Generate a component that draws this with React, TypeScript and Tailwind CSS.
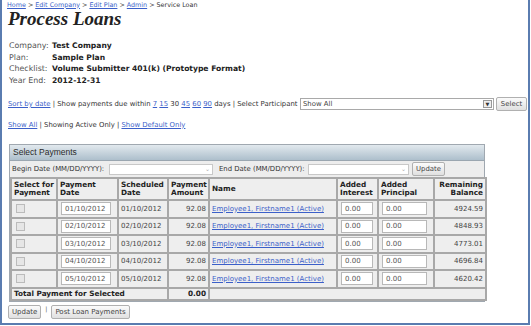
import React from 'react';

const PAYMENTS = [
  { date: '01/10/2012', balance: '4924.59' },
  { date: '02/10/2012', balance: '4848.93' },
  { date: '03/10/2012', balance: '4773.01' },
  { date: '04/10/2012', balance: '4696.84' },
  { date: '05/10/2012', balance: '4620.42' },
];

function Link({ children }: { children: React.ReactNode }) {
  return <span className="text-[#3b5fc9] underline">{children}</span>;
}

function Btn({ children, className = '' }: { children: React.ReactNode; className?: string }) {
  return (
    <div
      className={`flex items-center h-[14px] px-[3px] border border-[#b0b0b0] rounded-[2px] bg-gradient-to-b from-[#fbfbfb] to-[#e0e0e0] text-[#444] ${className}`}
    >
      {children}
    </div>
  );
}

function DateBox({ width }: { width: string }) {
  return (
    <div className={`flex items-center justify-end h-[11px] bg-white border border-[#c8c8c8] pr-[2px] ${width}`}>
      <span className="text-[#aaa] text-[6px] leading-none">&#8964;</span>
    </div>
  );
}

function TextBox({ value, width }: { value: string; width: string }) {
  return (
    <div className={`flex items-center h-[13px] ml-[3px] pl-[3px] bg-white border border-[#b8b8b8] text-[#555] ${width}`}>
      {value}
    </div>
  );
}

const cell = 'border-2 border-[#a8a8a8] bg-[#eeeeee] p-0';

export default function App() {
  return (
    <div className="w-[531px] h-[326px] bg-white">
      <div className="w-[530px] h-[325px] border-x-2 border-b-2 border-[#5a7cb0] pl-[5px] pr-[1px] font-['DejaVu_Sans',sans-serif] text-[7px] text-[#333] overflow-hidden">
        {/* breadcrumb */}
        <div className="flex items-center h-[9px] mt-[1px] text-[6.4px] text-[#333] gap-[2px]">
          <Link>Home</Link> &gt; <Link>Edit Company</Link> &gt; <Link>Edit Plan</Link> &gt; <Link>Admin</Link> &gt; <span>Service Loan</span>
        </div>

        <div className="h-[18px] leading-[18px] pl-[1px] font-['Liberation_Serif',serif] text-[19px] font-bold italic text-[#222]">
          Process Loans
        </div>

        {/* plan info */}
        <div className="mt-[12px] pl-[2px] grid grid-cols-[43px_auto] leading-[11.5px] text-[7.9px]">
          <span className="text-[#555]">Company:</span>
          <span className="font-bold text-[#222] text-[7.6px]">Test Company</span>
          <span className="text-[#555]">Plan:</span>
          <span className="font-bold text-[#222] text-[7.6px]">Sample Plan</span>
          <span className="text-[#555]">Checklist:</span>
          <span className="font-bold text-[#222] text-[7.6px]">Volume Submitter 401(k) (Prototype Format)</span>
          <span className="text-[#555]">Year End:</span>
          <span className="font-bold text-[#222] text-[7.6px]">2012-12-31</span>
        </div>

        {/* filters */}
        <div className="mt-[11px] h-[14px] flex items-center pl-[1px] text-[6.9px]">
          <span className="whitespace-pre">
            <Link>Sort by date</Link> | Show payments due within <Link>7</Link> <Link>15</Link> 30 <Link>45</Link>{' '}
            <Link>60</Link> <Link>90</Link> days | Select Participant
          </span>
          <div className="ml-auto flex items-center justify-between w-[194px] h-[12px] bg-white border border-[#a9a9a9] pl-[2px] pr-[1px]">
            <span className="text-[#444]">Show All</span>
            <div className="flex items-center justify-center w-[9px] h-[8px] border border-[#999] bg-[#eee] text-[5px] leading-none text-[#333]">
              &#9660;
            </div>
          </div>
          <Btn className="ml-[2px] w-[31px] justify-center">Select</Btn>
        </div>

        <div className="mt-[8px] h-[12px] flex items-center pl-[1px] whitespace-pre text-[6.9px]">
          <Link>Show All</Link> | Showing Active Only | <Link>Show Default Only</Link>
        </div>

        {/* Select Payments panel */}
        <div className="mt-[13px] ml-[2px] w-[476px] border border-[#a0a8b0]">
          <div className="h-[16px] flex items-center pl-[3px] bg-gradient-to-b from-[#e2e9ee] to-[#adbfcc] font-['Liberation_Sans',sans-serif] text-[8.5px] text-[#2a2a2a] border-b border-[#9aa6b0]">
            Select Payments
          </div>
          <div className="h-[16px] flex items-center pl-[2px] bg-[#ededed] text-[6.9px]">
            <span className="w-[97px]">Begin Date (MM/DD/YYYY):</span>
            <DateBox width="w-[104px]" />
            <span className="ml-[6px] w-[89px]">End Date (MM/DD/YYYY):</span>
            <DateBox width="w-[101px]" />
            <Btn className="ml-[3px] h-[13px]">Update</Btn>
          </div>
          <table className="w-[475px] table-fixed border-collapse border-2 border-[#777]">
            <colgroup>
              <col className="w-[46px]" />
              <col className="w-[61px]" />
              <col className="w-[50px]" />
              <col className="w-[41px]" />
              <col className="w-[128px]" />
              <col className="w-[41px]" />
              <col className="w-[56px]" />
              <col className="w-[52px]" />
            </colgroup>
            <thead>
              <tr className="h-[22px] font-bold text-[#222] leading-[8.5px] text-[7.3px]">
                <th className={`${cell} text-left pl-[2px]`}>Select for<br />Payment</th>
                <th className={`${cell} text-left pl-[2px]`}>Payment<br />Date</th>
                <th className={`${cell} text-left pl-[2px]`}>Scheduled<br />Date</th>
                <th className={`${cell} text-left pl-[2px]`}>Payment<br />Amount</th>
                <th className={`${cell} text-left pl-[2px]`}>Name</th>
                <th className={`${cell} text-left pl-[2px]`}>Added<br />Interest</th>
                <th className={`${cell} text-left pl-[2px]`}>Added<br />Principal</th>
                <th className={`${cell} text-right pr-[2px]`}>Remaining<br />Balance</th>
              </tr>
            </thead>
            <tbody>
              {PAYMENTS.map((p) => (
                <tr key={p.date} className="h-[17.5px]">
                  <td className={cell}>
                    <div className="ml-[4px] w-[9px] h-[9px] border border-[#bbb] bg-[#e6e6e6]" />
                  </td>
                  <td className={cell}>
                    <TextBox value={p.date} width="w-[50px]" />
                  </td>
                  <td className={`${cell} pl-[2px] text-[#444]`}>{p.date}</td>
                  <td className={`${cell} text-right pr-[2px] text-[#444]`}>92.08</td>
                  <td className={`${cell} pl-[2px]`}>
                    <Link>Employee1, Firstname1 (Active)</Link>
                  </td>
                  <td className={cell}>
                    <TextBox value="0.00" width="w-[32px]" />
                  </td>
                  <td className={cell}>
                    <TextBox value="0.00" width="w-[45px]" />
                  </td>
                  <td className={`${cell} text-right pr-[2px] text-[#444]`}>{p.balance}</td>
                </tr>
              ))}
              <tr className="h-[12px] font-bold text-[#222] text-[7.3px]">
                <td colSpan={3} className={`${cell} pl-[2px]`}>Total Payment for Selected</td>
                <td className={`${cell} text-right pr-[2px]`}>0.00</td>
                <td colSpan={4} className={cell} />
              </tr>
            </tbody>
          </table>
        </div>

        {/* actions */}
        <div className="mt-[3px] ml-[1px] flex items-start">
          <Btn>Update</Btn>
          <span className="ml-[4px] mr-[4px] -mt-[1px] text-[6px] text-[#555]">|</span>
          <Btn>Post Loan Payments</Btn>
        </div>
      </div>
    </div>
  );
}
